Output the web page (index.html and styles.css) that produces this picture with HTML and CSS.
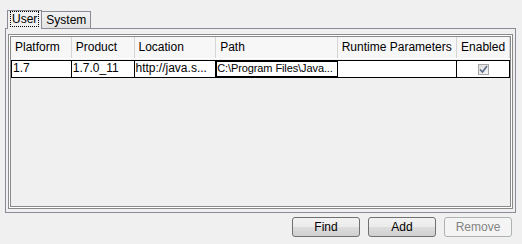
FILE: index.html
```html
<!DOCTYPE html>
<html>
<head>
<meta charset="utf-8">
<link rel="stylesheet" href="styles.css">
</head>
<body>
<div class="root">
  <div class="tabs">
    <div class="tab active"><span class="focus">User</span></div>
    <div class="tab">System</div>
  </div>
  <div class="panel">
    <div class="scroll">
      <div class="row head">
        <div class="c c1">Platform</div>
        <div class="c c2">Product</div>
        <div class="c c3">Location</div>
        <div class="c c4">Path</div>
        <div class="c c5">Runtime Parameters</div>
        <div class="c c6 center">Enabled</div>
      </div>
      <div class="row data">
        <div class="c c1">1.7</div>
        <div class="c c2">1.7.0_11</div>
        <div class="c c3">http://java.s...</div>
        <div class="c c4 sel">C:\Program Files\Java...</div>
        <div class="c c5"></div>
        <div class="c c6 center"><span class="chk"><svg width="9" height="9" viewBox="0 0 9 9"><path d="M1 4.5 L3.5 7 L8 1" fill="none" stroke="#5a6a86" stroke-width="1.6"/></svg></span></div>
      </div>
    </div>
  </div>
  <div class="buttons">
    <button class="btn">Find</button>
    <button class="btn">Add</button>
    <button class="btn disabled">Remove</button>
  </div>
</div>
</body>
</html>
```
FILE: styles.css
```css
html, body { margin: 0; padding: 0; }
body {
  background: #f0f0f0;
  font-family: "Liberation Sans", sans-serif;
  font-size: 12px;
  color: #000;
  width: 522px;
  height: 244px;
  overflow: hidden;
}
.root { padding: 9px 6px 0 5px; }
.tabs { display: flex; align-items: flex-end; padding-left: 2px; height: 19px; position: relative; z-index: 1; }
.tab {
  height: 16px;
  padding: 0 4px;
  border: 1px solid #898c95;
  border-bottom: none;
  background: linear-gradient(#f2f2f2, #e3e3e3);
  line-height: 16px;
  font-size: 12px;
}
.tab.active {
  height: 18px;
  background: #f0f0f0;
  margin-bottom: -1px;
  padding: 0 3px;
  line-height: 17px;
}
.tab + .tab { border-left: none; }
.focus { outline: 1px dotted #000; padding: 0 1px; }
.panel {
  border: 1px solid #898c95;
  height: 185px;
  padding: 5px 2px 2px 2px;
  box-sizing: border-box;
}
.scroll {
  border: 1px solid #8a8a8a;
  box-shadow: inset 0 0 0 1px #fff, inset 0 0 0 2px #8a8a8a;
  height: 175px;
  box-sizing: border-box;
  padding: 2px;
}
.row { display: flex; }
.head { height: 21px; background: #f7f7f7; border-bottom: 1px solid #fff; }
.head .c {
  border-right: 1px solid #d5d5d5;
  line-height: 21px;
  padding-left: 4px;
}
.c { box-sizing: border-box; white-space: nowrap; overflow: hidden; }
.c1 { width: 61px; }
.c2 { width: 63px; }
.c3 { width: 82px; }
.c4 { width: 122px; }
.c5 { width: 120px; }
.c6 { width: 53px; }
.center { text-align: center; padding-left: 0 !important; }
.data {
  margin-top: 1px;
  height: 16px;
  background: #fff;
  border-top: 1px solid #000;
  border-bottom: 1px solid #000;
  box-sizing: content-box;
}
.data .c {
  border-right: 1px solid #000;
  line-height: 15px;
  padding-left: 1px;
}
.data .c1 { border-left: 1px solid #000; }
.data .sel { outline: 1px solid #000; outline-offset: -1px; font-size: 11px; letter-spacing: -0.1px; }
.chk {
  display: inline-block;
  width: 11px; height: 11px;
  border: 1px solid #a7a7a7;
  background: linear-gradient(135deg, #dcdcdc, #f8f8f8);
  box-sizing: border-box;
  vertical-align: -2px;
  line-height: 0;
}
.buttons { display: flex; justify-content: flex-end; gap: 8px; padding: 4px 4px 0 0; }
.btn {
  width: 68px;
  height: 20px;
  border: 1px solid #707070;
  border-radius: 3px;
  background: linear-gradient(#f2f2f2 0%, #ebebeb 50%, #dddddd 51%, #cfcfcf 100%);
  font-family: "Liberation Sans", sans-serif;
  font-size: 12px;
  color: #000;
  padding: 0;
}
.btn.disabled {
  border-color: #adb2b5;
  background: #f4f4f4;
  color: #838383;
}
```
